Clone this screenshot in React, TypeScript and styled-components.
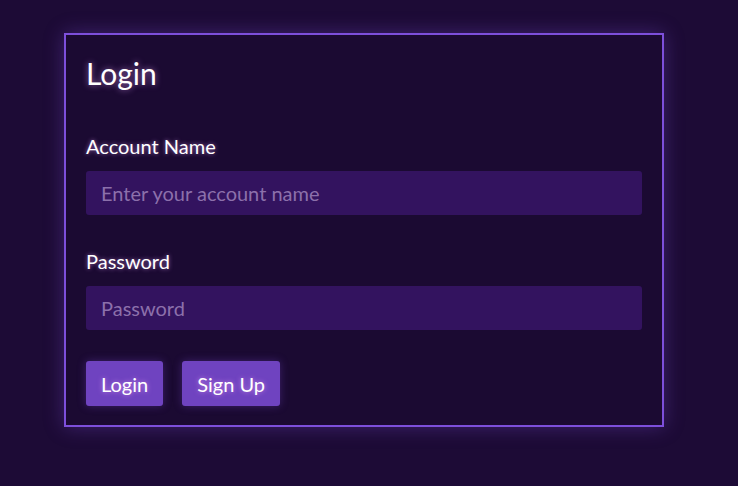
import React from 'react'
import styled, { createGlobalStyle } from 'styled-components'

const GlobalStyle = createGlobalStyle`
  html, body {
    margin: 0;
    padding: 0;
    background: #1d0b36;
    font-family: Lato, 'Noto Sans', sans-serif;
    color: #fff;
  }
  * {
    box-sizing: border-box;
  }
`

const Page = styled.div`
  min-height: 486px;
  padding: 33px 0 0 64px;
`

const Card = styled.form`
  width: 600px;
  padding: 20px 20px 19px;
  background: #1b0a32;
  border: 2px solid #7d4fdb;
  box-shadow: 0 0 18px rgba(125, 79, 219, 0.35);
`

const Title = styled.h2`
  margin: 0 0 43px;
  font-size: 30px;
  font-weight: 400;
  line-height: 36px;
  text-shadow: 0 0 6px rgba(230, 160, 255, 0.6);
`

const Field = styled.div`
  display: flex;
  flex-direction: column;
  gap: 13px;
  & + & {
    margin-top: 34px;
  }
`

const Label = styled.label`
  font-size: 20px;
  font-weight: 400;
  line-height: 24px;
  text-shadow: 0 0 4px rgba(230, 160, 255, 0.6);
`

const Input = styled.input`
  width: 100%;
  height: 44px;
  padding: 0 15px;
  border: none;
  border-radius: 3px;
  background: #33135f;
  color: #fff;
  font-family: inherit;
  font-size: 20px;
  outline: none;
  &::placeholder {
    color: #8c70ab;
  }
`

const Actions = styled.div`
  display: flex;
  gap: 19px;
  margin-top: 31px;
`

const Button = styled.button`
  height: 45px;
  padding: 0 15px;
  border: none;
  border-radius: 3px;
  background: #6f43c0;
  color: #fff;
  font-family: inherit;
  font-size: 20px;
  text-shadow: 0 0 5px rgba(255, 170, 255, 0.6);
  box-shadow: 0 0 8px rgba(111, 67, 192, 0.4);
  cursor: pointer;
`

export default function App() {
  return (
    <Page>
      <GlobalStyle />
      <Card onSubmit={(e) => e.preventDefault()}>
        <Title>Login</Title>
        <Field>
          <Label>Account Name</Label>
          <Input placeholder='Enter your account name' />
        </Field>
        <Field>
          <Label>Password</Label>
          <Input type='password' placeholder='Password' />
        </Field>
        <Actions>
          <Button type='submit'>Login</Button>
          <Button type='button'>Sign Up</Button>
        </Actions>
      </Card>
    </Page>
  )
}
